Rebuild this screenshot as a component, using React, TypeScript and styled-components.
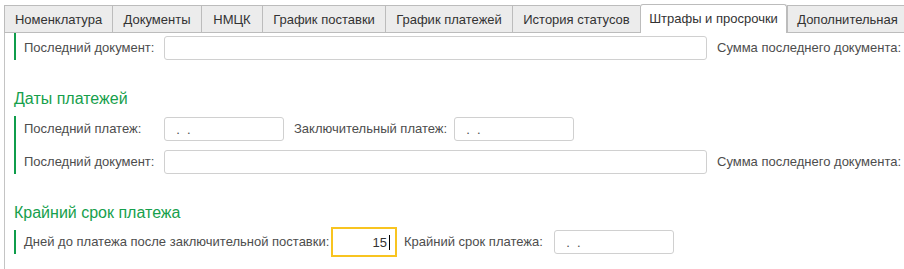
import React from 'react';
import styled, { createGlobalStyle } from 'styled-components';

const GlobalStyle = createGlobalStyle`
    html, body {
        margin: 0;
        padding: 0;
        background: #ffffff;
        overflow: hidden;
    }
    body {
        font-family: 'Liberation Sans', Arial, sans-serif;
        font-size: 13px;
        color: #4d4d4d;
    }
`;

type TabItem = {
    title: string;
    width: number;
    active?: boolean;
};

const tabs: TabItem[] = [
    { title: 'Номенклатура', width: 108 },
    { title: 'Документы', width: 89 },
    { title: 'НМЦК', width: 61 },
    { title: 'График поставки', width: 123 },
    { title: 'График платежей', width: 127 },
    { title: 'История статусов', width: 128 },
    { title: 'Штрафы и просрочки', width: 147, active: true },
    { title: 'Дополнительная', width: 120 },
];

const EMPTY_DATE = '  .  .';

const App: React.FC = () => {
    return (
        <>
            <GlobalStyle />
            <Page>
                <TabBar>
                    {tabs.map((tab) => (
                        <Tab key={tab.title} $width={tab.width} $active={!!tab.active}>
                            {tab.title}
                        </Tab>
                    ))}
                </TabBar>
                <Content>
                    <Group $paddingTop={3}>
                        <Row>
                            <Label $width={130}>Последний документ:</Label>
                            <Field $width={543} />
                            <Label>Сумма последнего документа:</Label>
                        </Row>
                    </Group>

                    <Heading>Даты платежей</Heading>
                    <Group $paddingTop={1}>
                        <Row>
                            <Label $width={130}>Последний платеж:</Label>
                            <Field $width={120}>{EMPTY_DATE}</Field>
                            <Label $width={150}>Заключительный платеж:</Label>
                            <Field $width={120}>{EMPTY_DATE}</Field>
                        </Row>
                        <Row>
                            <Label $width={130}>Последний документ:</Label>
                            <Field $width={543} />
                            <Label>Сумма последнего документа:</Label>
                        </Row>
                    </Group>

                    <Heading>Крайний срок платежа</Heading>
                    <Group $paddingTop={0}>
                        <Row>
                            <Label $width={300}>Дней до платежа после заключительной поставки:</Label>
                            <FocusedField $width={60}>
                                15
                                <Caret />
                            </FocusedField>
                            <Label $width={140}>Крайний срок платежа:</Label>
                            <Field $width={120}>{EMPTY_DATE}</Field>
                        </Row>
                    </Group>
                </Content>
            </Page>
        </>
    );
};

const Page = styled.div`
    display: flex;
    flex-direction: column;
    width: 904px;
    height: 269px;
    padding: 4px 0 0 4px;
    box-sizing: border-box;
    overflow: hidden;
`;

const TabBar = styled.div`
    display: flex;
    align-items: flex-end;
    height: 29px;
    box-sizing: border-box;
    border-bottom: 1px solid #bcbcbc;
    flex-shrink: 0;
`;

const Tab = styled.div<{ $width: number; $active: boolean }>`
    flex: 0 0 ${(props) => props.$width}px;
    min-width: 0;
    box-sizing: border-box;
    height: ${(props) => (props.$active ? '29px' : '27px')};
    margin-bottom: ${(props) => (props.$active ? '-1px' : '0')};
    display: flex;
    align-items: center;
    justify-content: center;
    padding-bottom: ${(props) => (props.$active ? '2px' : '0')};
    border-top: 1px solid #bcbcbc;
    border-left: 1px solid #bcbcbc;
    border-right: ${(props) => (props.$active ? '1px solid #bcbcbc' : 'none')};
    border-radius: ${(props) => (props.$active ? '3px 3px 0 0' : '0')};
    background: ${(props) => (props.$active ? '#ffffff' : '#ececec')};
    color: #333333;
    font-size: 13px;
    white-space: nowrap;
    position: relative;
    z-index: ${(props) => (props.$active ? 1 : 0)};
`;

const Content = styled.div`
    flex: 1;
    display: flex;
    flex-direction: column;
    border-left: 1px solid #c4c4c4;
    padding-left: 9px;
`;

const Group = styled.div<{ $paddingTop: number }>`
    display: flex;
    flex-direction: column;
    gap: 9px;
    border-left: 2px solid #0f9d4b;
    padding: ${(props) => props.$paddingTop}px 0 0 8px;
`;

const Heading = styled.div`
    margin: 30px 0 8px;
    font-size: 16px;
    line-height: 18px;
    color: #16a04c;
    white-space: nowrap;
`;

const Row = styled.div`
    display: flex;
    align-items: center;
    gap: 10px;
    height: 24px;
`;

const Label = styled.span<{ $width?: number }>`
    ${(props) => (props.$width ? `flex: 0 0 ${props.$width}px;` : 'flex: 0 0 auto;')}
    min-width: 0;
    white-space: nowrap;
    color: #4d4d4d;
    font-size: 13px;
    line-height: 16px;
`;

const Field = styled.div<{ $width: number }>`
    flex: 0 0 ${(props) => props.$width}px;
    min-width: 0;
    box-sizing: border-box;
    height: 24px;
    border: 1px solid #d0d0d0;
    border-radius: 3px;
    background: #ffffff;
    padding: 0 4px;
    display: flex;
    align-items: center;
    white-space: pre;
    color: #4d4d4d;
    font-size: 13px;
`;

const FocusedField = styled(Field)`
    border-color: transparent;
    outline: 2px solid #f8c420;
    outline-offset: 1px;
    border-radius: 0;
    justify-content: flex-end;
    padding-right: 3px;
    color: #333333;
`;

const Caret = styled.span`
    display: inline-block;
    width: 0;
    height: 15px;
    margin-left: 2px;
    border-left: 1px solid #000000;
`;

export default App;
